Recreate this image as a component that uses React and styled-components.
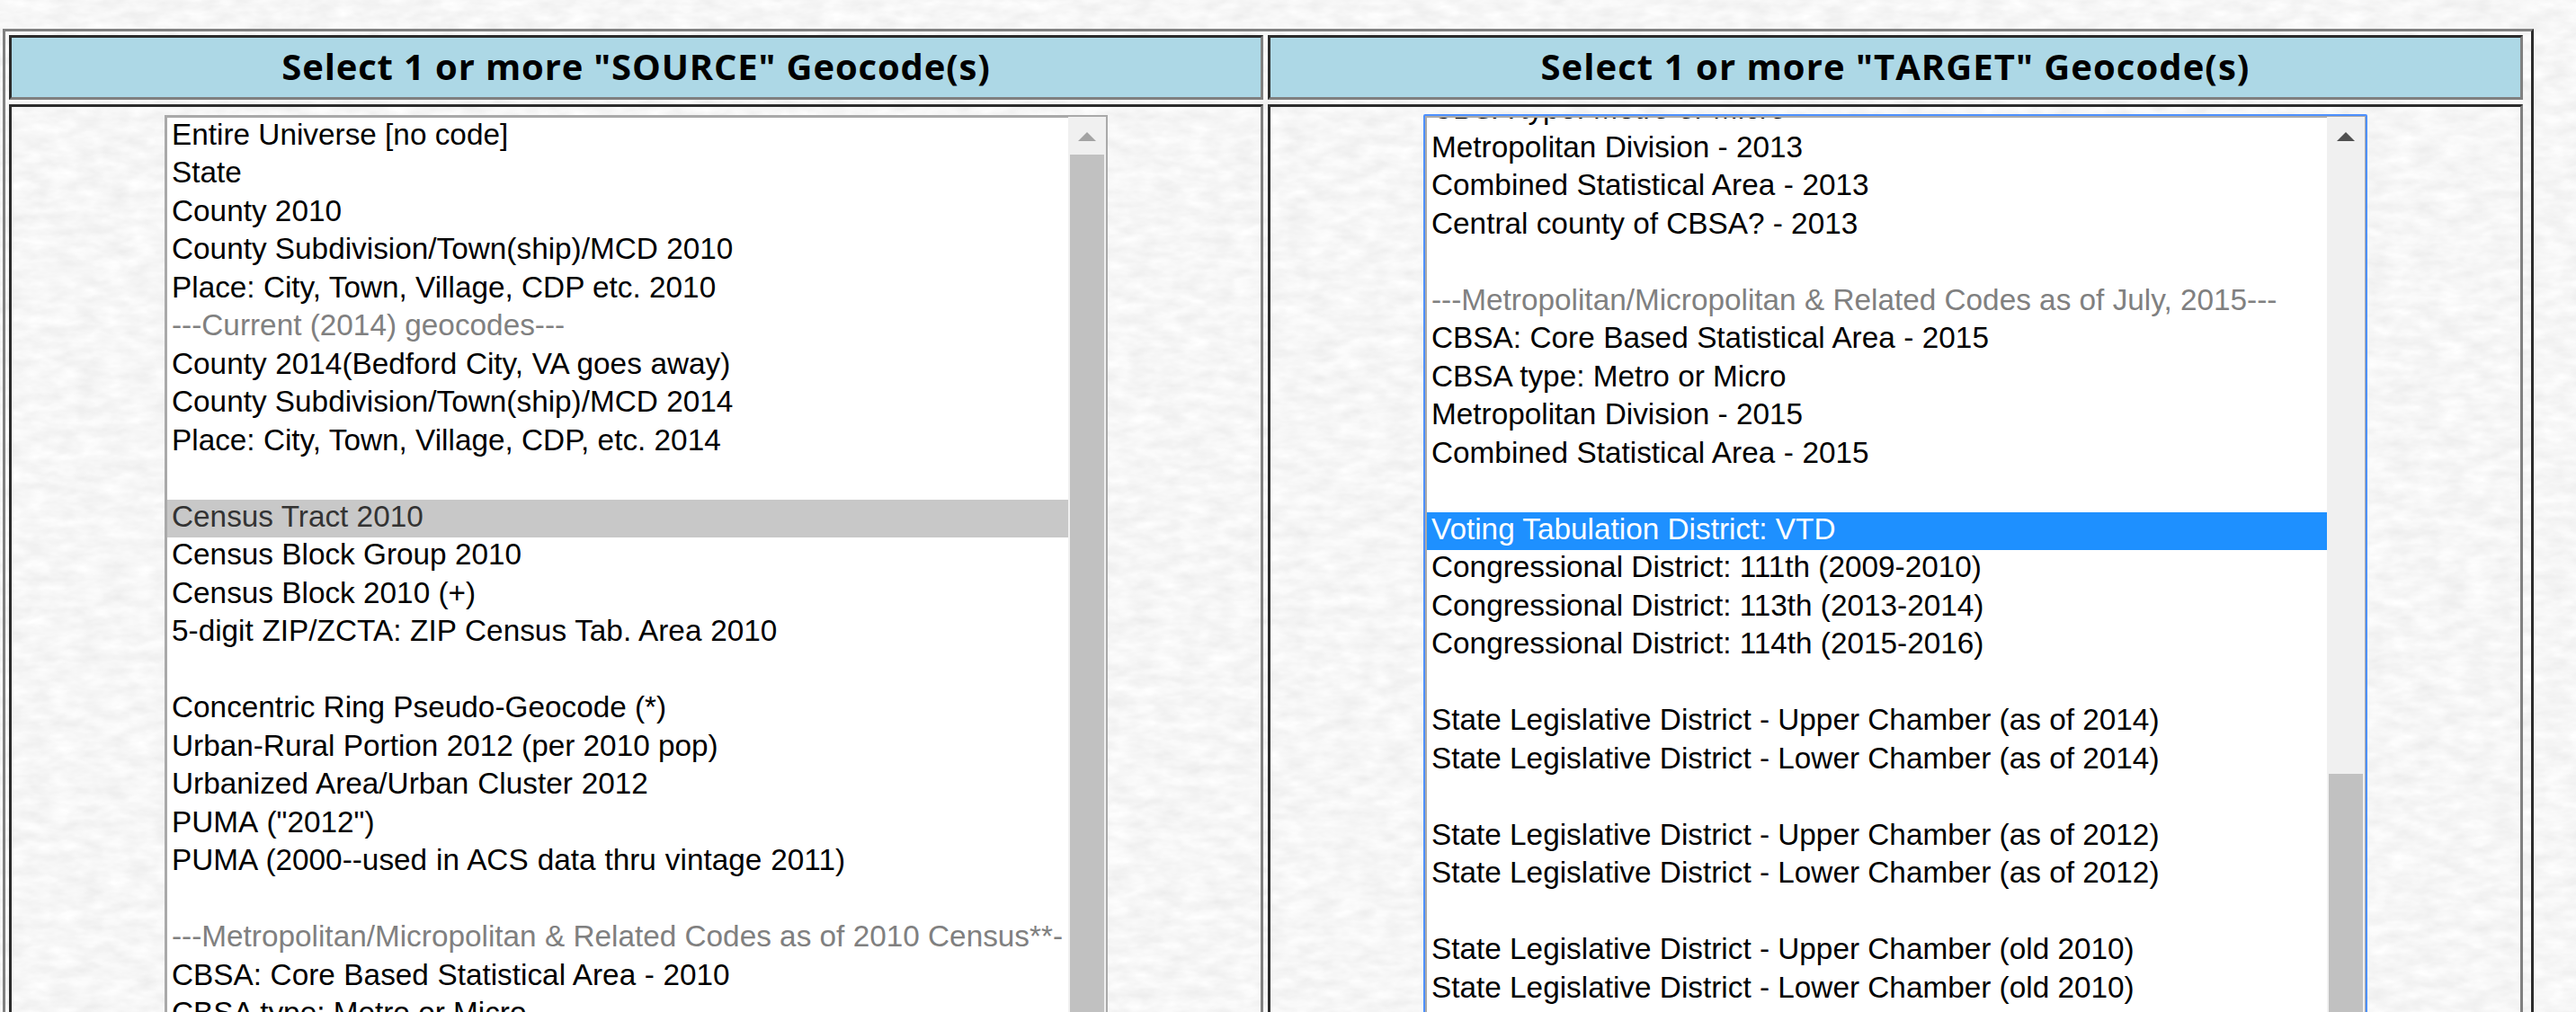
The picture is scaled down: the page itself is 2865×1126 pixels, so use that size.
import React from "react";
import styled, { createGlobalStyle } from "styled-components";

const PageStyle = createGlobalStyle`
  html, body { margin: 0; height: 100%; overflow: hidden; background: #f7f7f7; }
  * { box-sizing: border-box; }
`;

const Page = styled.main`
  position: relative;
  width: 2865px;
  height: 1126px;
  padding: 32px 47px 0 3px;
  overflow: hidden;
  isolation: isolate;
`;

const Paper = styled.svg`
  position: absolute;
  inset: 0;
  width: 100%;
  height: 100%;
  z-index: -1;
`;

const Table = styled.div`
  display: grid;
  grid-template-columns: 1395px 1396px;
  grid-template-rows: 72px 1100px;
  gap: 5px;
  width: 2815px;
  padding: 4px;
  border: 3px solid;
  border-color: #808080 #2c2c2c #2c2c2c #808080;
`;

const Cell = styled.div`
  border: 3px solid;
  border-color: #2c2c2c #808080 #808080 #2c2c2c;
`;

const HeaderCell = styled(Cell)`
  display: flex;
  align-items: center;
  justify-content: center;
  padding-bottom: 2px;
  background: #add8e6;
  color: #000;
  font: 700 40px/60px "Open Sans", "Noto Sans", sans-serif;
  letter-spacing: ${(p) => p.$tracking}px;
  white-space: pre;
`;

const BodyCell = styled(Cell)`
  display: flex;
  align-items: flex-start;
  padding: 9px 0 0 ${(p) => p.$indent}px;
`;

const ListBox = styled.div`
  display: flex;
  width: ${(p) => (p.$focused ? 1048 : 1049)}px;
  height: 1200px;
  background: #fff;
  border: solid #a9a9a9;
  border-width: 2px 2px 2px 3px;
  ${(p) => p.$focused && `
    border-radius: 1px;
    outline: 2px solid #4d90fe;
    outline-offset: -1px;
  `}
`;

const Options = styled.div`
  flex: 1;
  min-width: 0;
  overflow: hidden;
  border-top: 1px solid #a9a9a9;
`;

const Scroller = styled.div`
  margin-top: ${(p) => -p.$scrolled}px;
`;

const Option = styled.div`
  height: 42.5px;
  padding: 0 5px;
  overflow: hidden;
  white-space: pre;
  font: 33.333px/38px "Liberation Sans", Arial, sans-serif;
  word-spacing: ${(p) => p.$gap || 0}px;
  color: ${(p) => (p.$disabled ? "#808080" : p.$selected === "active" ? "#fff" : p.$selected ? "#333" : "#000")};
  background: ${(p) => (p.$selected === "active" ? "#1e90ff" : p.$selected ? "#c8c8c8" : "transparent")};
`;

const Scrollbar = styled.div`
  flex: 0 0 42px;
  display: flex;
  flex-direction: column;
  align-items: center;
  background: #f0f0f0;
`;

const ArrowButton = styled.div`
  flex: 0 0 42px;
  padding-top: 17px;
`;

const Arrow = styled.svg`
  display: block;
  width: 20px;
  height: 10px;
  fill: ${(p) => (p.$enabled ? "#505050" : "#a3a3a3")};
`;

const Thumb = styled.div`
  width: 38px;
  flex: 1;
  margin-top: ${(p) => p.$offset}px;
  background: #c1c1c1;
`;

const sourceOptions = [
  "Entire Universe [no code]",
  "State",
  "County 2010",
  "County Subdivision/Town(ship)/MCD 2010",
  "Place: City, Town, Village, CDP etc. 2010",
  { label: "---Current (2014) geocodes---", disabled: true },
  { label: "County 2014(Bedford City, VA goes away)", gap: 0.4 },
  "County Subdivision/Town(ship)/MCD 2014",
  "Place: City, Town, Village, CDP, etc. 2014",
  "",
  { label: "Census Tract 2010", selected: "idle" },
  "Census Block Group 2010",
  "Census Block 2010 (+)",
  { label: "5-digit ZIP/ZCTA: ZIP Census Tab. Area 2010", gap: 0.45 },
  "",
  "Concentric Ring Pseudo-Geocode (*)",
  "Urban-Rural Portion 2012 (per 2010 pop)",
  { label: "Urbanized Area/Urban Cluster 2012", gap: 0.6 },
  { label: 'PUMA ("2012")', gap: 1.8 },
  { label: "PUMA (2000--used in ACS data thru vintage 2011)", gap: 0.7 },
  "",
  { label: "---Metropolitan/Micropolitan & Related Codes as of 2010 Census**-", disabled: true },
  { label: "CBSA: Core Based Statistical Area - 2010", gap: 0.3 },
  "CBSA type: Metro or Micro",
];

const targetOptions = [
  "CBSA type: Metro or Micro",
  "Metropolitan Division - 2013",
  { label: "Combined Statistical Area - 2013", gap: 0.3 },
  "Central county of CBSA? - 2013",
  "",
  { label: "---Metropolitan/Micropolitan & Related Codes as of July, 2015---", disabled: true },
  { label: "CBSA: Core Based Statistical Area - 2015", gap: 0.2 },
  "CBSA type: Metro or Micro",
  "Metropolitan Division - 2015",
  { label: "Combined Statistical Area - 2015", gap: 0.3 },
  "",
  { label: "Voting Tabulation District: VTD", selected: "active" },
  "Congressional District: 111th (2009-2010)",
  "Congressional District: 113th (2013-2014)",
  "Congressional District: 114th (2015-2016)",
  "",
  "State Legislative District - Upper Chamber (as of 2014)",
  "State Legislative District - Lower Chamber (as of 2014)",
  "",
  "State Legislative District - Upper Chamber (as of 2012)",
  "State Legislative District - Lower Chamber (as of 2012)",
  "",
  "State Legislative District - Upper Chamber (old 2010)",
  "State Legislative District - Lower Chamber (old 2010)",
];

function GeocodeList({ options, focused, scrolled, thumbOffset = 0 }) {
  return (
    <ListBox $focused={focused}>
      <Options>
        <Scroller $scrolled={scrolled}>
          {options.map((item, i) => {
            const o = typeof item === "string" ? { label: item } : item;
            return (
              <Option key={i} $disabled={o.disabled} $selected={o.selected} $gap={o.gap}>
                {o.label}
              </Option>
            );
          })}
        </Scroller>
      </Options>
      <Scrollbar>
        <ArrowButton>
          <Arrow viewBox="0 0 20 10" $enabled={scrolled > 1}>
            <path d="M0 10 10 0 20 10Z" />
          </Arrow>
        </ArrowButton>
        <Thumb $offset={thumbOffset} />
      </Scrollbar>
    </ListBox>
  );
}

export default function App() {
  return (
    <Page>
      <PageStyle />
      <Paper aria-hidden="true">
        <filter id="fibres" x="0" y="0" width="100%" height="100%" colorInterpolationFilters="sRGB">
          <feTurbulence type="fractalNoise" baseFrequency="0.035 0.08" numOctaves="3" seed="8" />
          <feColorMatrix values="0.09 0 0 0 0.921  0.09 0 0 0 0.921  0.09 0 0 0 0.921  0 0 0 0 1" />
        </filter>
        <rect width="100%" height="100%" filter="url(#fibres)" />
      </Paper>
      <Table>
        <HeaderCell $tracking={0.85}>Select 1 or more "SOURCE" Geocode(s)</HeaderCell>
        <HeaderCell $tracking={1.05}>Select 1 or more "TARGET" Geocode(s)</HeaderCell>
        <BodyCell $indent={170}>
          <GeocodeList options={sourceOptions} scrolled={0.25} />
        </BodyCell>
        <BodyCell $indent={171}>
          <GeocodeList options={targetOptions} focused scrolled={28.75} thumbOffset={689} />
        </BodyCell>
      </Table>
    </Page>
  );
}
